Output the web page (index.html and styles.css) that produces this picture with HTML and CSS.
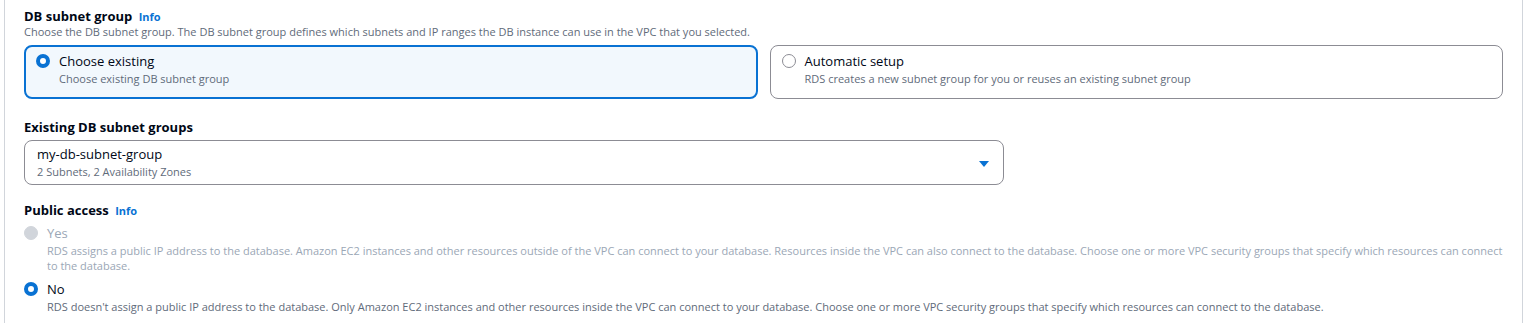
FILE: index.html
```html
<!DOCTYPE html>
<html lang="en">
<head>
  <meta charset="UTF-8">
  <meta name="viewport" content="width=device-width, initial-scale=1.0">
  <title>Connectivity</title>
  <link rel="stylesheet" href="styles.css">
</head>
<body>
  <div class="panel">
    <!-- DB subnet group -->
    <section class="field">
      <div class="field-label">DB subnet group <a class="info" href="#">Info</a></div>
      <p class="field-desc">Choose the DB subnet group. The DB subnet group defines which subnets and IP ranges the DB instance can use in the VPC that you selected.</p>
      <div class="tiles">
        <label class="tile selected">
          <span class="radio checked"></span>
          <span class="radio-text">
            <span class="radio-label">Choose existing</span>
            <span class="radio-desc">Choose existing DB subnet group</span>
          </span>
        </label>
        <label class="tile">
          <span class="radio"></span>
          <span class="radio-text">
            <span class="radio-label">Automatic setup</span>
            <span class="radio-desc">RDS creates a new subnet group for you or reuses an existing subnet group</span>
          </span>
        </label>
      </div>
    </section>

    <!-- Existing DB subnet groups -->
    <section class="field field-select">
      <div class="field-label">Existing DB subnet groups</div>
      <div class="select">
        <div class="select-text">
          <span class="select-value">my-db-subnet-group</span>
          <span class="select-desc">2 Subnets, 2 Availability Zones</span>
        </div>
        <svg class="caret" width="12" height="12" viewBox="0 0 12 12"><path d="M1 3h10L6 9z" fill="#0972d3"/></svg>
      </div>
    </section>

    <!-- Public access -->
    <section class="field">
      <div class="field-label">Public access <a class="info" href="#">Info</a></div>
      <div class="radio-group">
        <label class="option disabled">
          <span class="radio"></span>
          <span class="radio-text">
            <span class="radio-label">Yes</span>
            <span class="radio-desc">RDS assigns a public IP address to the database. Amazon EC2 instances and other resources outside of the VPC can connect to your database. Resources inside the VPC can also connect to the database. Choose one or more VPC security groups that specify which resources can connect to the database.</span>
          </span>
        </label>
        <label class="option">
          <span class="radio checked"></span>
          <span class="radio-text">
            <span class="radio-label">No</span>
            <span class="radio-desc">RDS doesn't assign a public IP address to the database. Only Amazon EC2 instances and other resources inside the VPC can connect to your database. Choose one or more VPC security groups that specify which resources can connect to the database.</span>
          </span>
        </label>
      </div>
    </section>
  </div>
</body>
</html>
```

FILE: styles.css
```css
body {
  margin: 0;
  font-family: 'Open Sans', 'Noto Sans', sans-serif;
  color: #000716;
  background-color: #fff;
}

.panel {
  margin: 0 4px;
  padding: 7px 19px 0 19px;
  border-left: 1px solid #d1d5db;
  border-right: 1px solid #d1d5db;
  height: 330px;
}

.field {
  margin-bottom: 19px;
}

.field-select {
  margin-bottom: 16px;
}

.field-label {
  font-size: 13px;
  font-weight: 700;
  line-height: 18px;
}

.info {
  margin-left: 3px;
  color: #0972d3;
  font-size: 11px;
  font-weight: 700;
  text-decoration: none;
}

.field-desc {
  margin: -2px 0 5px;
  font-size: 11px;
  line-height: 16px;
  color: #5f6b7a;
}

.tiles {
  display: grid;
  grid-template-columns: 1fr 1fr;
  gap: 12px;
}

.tile {
  display: flex;
  gap: 9px;
  padding: 5px 11px 12px;
  border: 1px solid #8c8c94;
  border-radius: 8px;
}

.tile.selected {
  padding: 4px 10px 11px;
  border: 2px solid #0972d3;
  background-color: #f2f8fd;
}

.radio {
  flex: none;
  box-sizing: border-box;
  width: 14px;
  height: 14px;
  margin-top: 3px;
  border: 1px solid #8c8c94;
  border-radius: 50%;
  background: #fff;
}

.radio.checked {
  border: 4px solid #0972d3;
}

.radio-text {
  display: flex;
  flex-direction: column;
}

.radio-label {
  font-size: 13px;
  line-height: 20px;
}

.radio-desc {
  font-size: 11px;
  line-height: 15px;
  color: #5f6b7a;
}

.select {
  display: flex;
  align-items: center;
  justify-content: space-between;
  box-sizing: border-box;
  width: 980px;
  margin-top: 4px;
  padding: 4px 13px 5px 12px;
  border: 1px solid #8c8c94;
  border-radius: 8px;
}

.select-text {
  display: flex;
  flex-direction: column;
}

.select-value {
  font-size: 13px;
  line-height: 19px;
}

.select-desc {
  font-size: 11px;
  line-height: 15px;
  color: #5f6b7a;
}

.caret {
  margin-top: 4px;
}

.radio-group {
  display: flex;
  flex-direction: column;
  gap: 6px;
  margin-top: 3px;
}

.option {
  display: flex;
  gap: 9px;
}

.option.disabled .radio {
  border-color: #d1d5db;
  background: #d1d5db;
}

.option.disabled .radio-label,
.option.disabled .radio-desc {
  color: #9ba7b6;
}
```
